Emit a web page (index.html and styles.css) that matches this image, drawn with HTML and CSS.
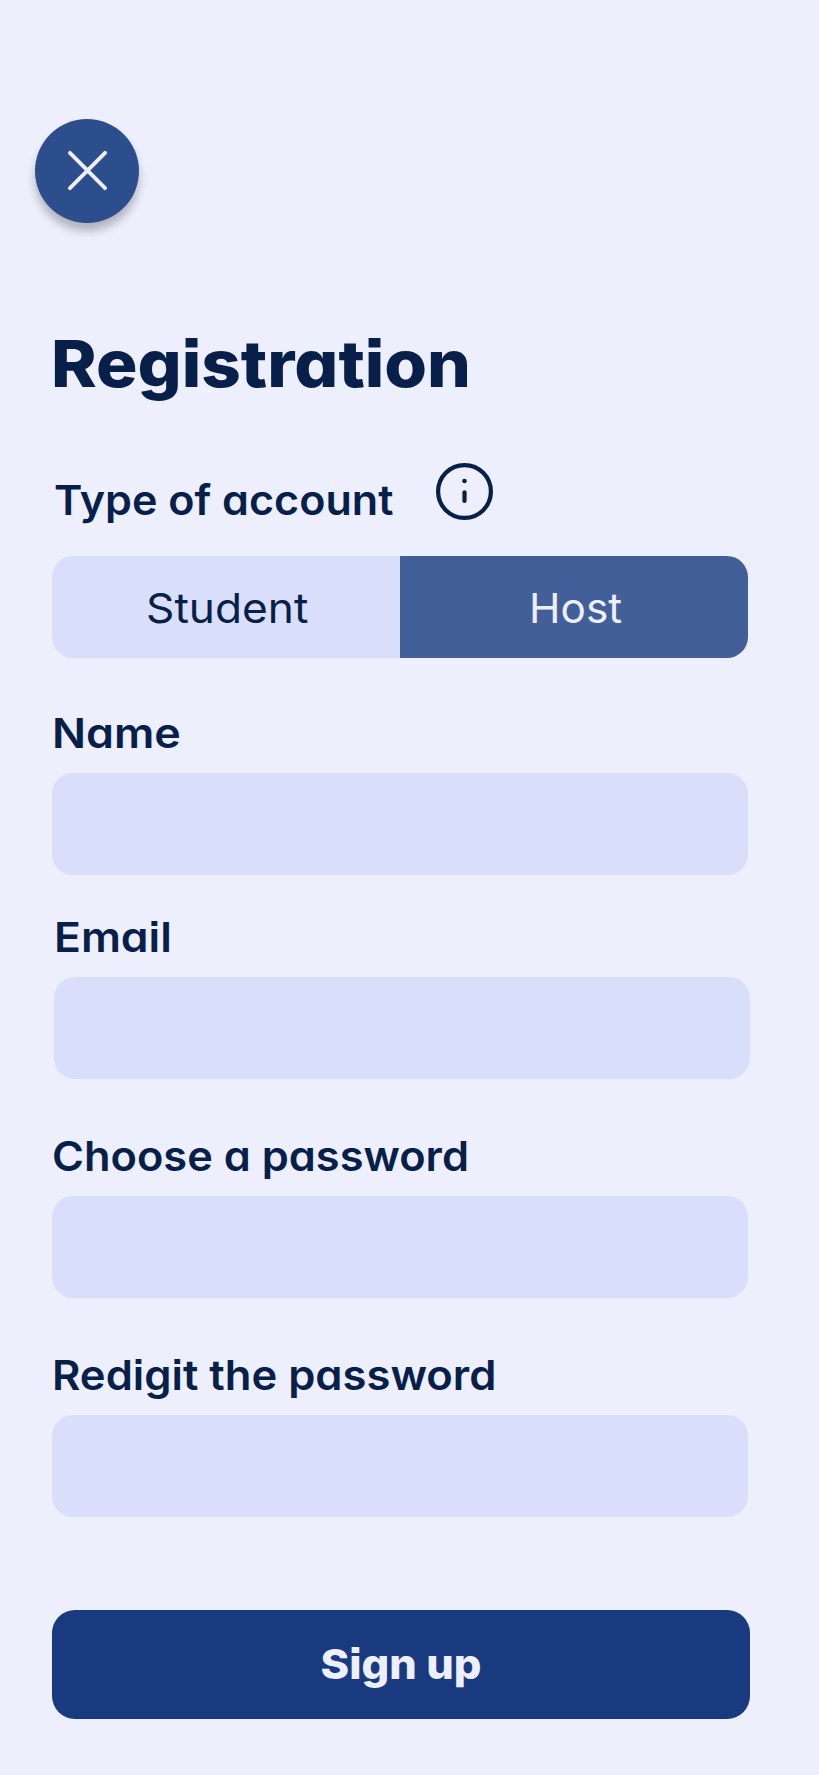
FILE: index.html
```html
<!DOCTYPE html>
<html lang="en">
<head>
<meta charset="utf-8">
<title>Registration</title>
<link rel="stylesheet" href="styles.css">
</head>
<body>
<main class="screen">
  <button class="close" type="button" aria-label="Close">
    <svg class="close-icon" viewBox="0 0 42 42"><path d="M3 3 39 39M39 3 3 39"/></svg>
  </button>
  <h1 class="title">Registration</h1>
  <form class="form">
    <div class="account-head">
      <span class="label type-label">Type of account</span>
      <svg class="info" viewBox="0 0 57 57"><circle class="ring" cx="28.500" cy="28.500" r="26.400"/><circle class="dot" cx="28.500" cy="18" r="2.300"/><path class="stem" d="M28.500 29.300v8.700"/></svg>
    </div>
    <div class="toggle">
      <button class="option student" type="button"><span class="text">Student</span></button>
      <button class="option host" type="button"><span class="text">Host</span></button>
    </div>
    <div class="field name"><label class="label" for="name">Name</label><input class="input" id="name"></div>
    <div class="field email"><label class="label" for="email">Email</label><input class="input" id="email" type="email"></div>
    <div class="field choose"><label class="label" for="password">Choose a password</label><input class="input" id="password" type="password"></div>
    <div class="field redigit"><label class="label" for="repeat">Redigit the password</label><input class="input" id="repeat" type="password"></div>
    <button class="submit" type="button"><span class="text">Sign up</span></button>
  </form>
</main>
</body>
</html>
```
FILE: styles.css
```css
* { box-sizing: border-box; }

body {
  margin: 0;
  background: #edeffc;
  color: #071f49;
  font-family: Inter, "Open Sans", sans-serif;
  font-feature-settings: "cv11", "ss07";
}

button, input { font: inherit; font-feature-settings: inherit; border: 0; margin: 0; padding: 0; }

.screen { width: 819px; height: 1775px; padding: 118.5px 0 0 52px; overflow: hidden; }

.close {
  display: flex;
  align-items: center;
  justify-content: center;
  width: 104px;
  height: 104px;
  margin-left: -16.6px;
  border-radius: 50%;
  background: #2d4e8c;
  box-shadow: 0 8px 9px rgba(0, 0, 0, .25);
}
.close-icon { width: 41px; height: 41px; fill: none; stroke: #edeffc; stroke-width: 4; stroke-linecap: round; }

.title { margin: 101.5px 0 0 -1px; line-height: 80px; font-size: 65px; font-weight: 800; white-space: nowrap; transform: scaleX(1.063); transform-origin: left; }

.form { display: flex; flex-direction: column; align-items: flex-start; }
.label { display: block; font-size: 41.5px; font-weight: 610; line-height: 50px; white-space: nowrap; transform-origin: left; }
.text { display: inline-block; }

.account-head { display: flex; height: 97px; margin-top: 44px; padding-top: 15px; }
.type-label { width: 382px; margin: 11.5px 0 0 2px; transform: scaleX(1.038); }
.info { width: 57px; height: 57px; fill: none; stroke: #071f49; stroke-width: 4.2; stroke-linecap: round; }
.info .dot { fill: #071f49; stroke: none; }

.toggle { display: flex; width: 696px; height: 102px; margin-top: 11px; border-radius: 21px; overflow: hidden; }
.option { flex: 1; padding: 1px 0 0 3px; font-size: 41.5px; font-weight: 400; }
.student { background: #d9defa; color: #071f49; }
.student .text { transform: scaleX(1.065); }
.host { background: #435f99; color: #edeffc; }
.host .text { transform: scaleX(1.02); }

.field { width: 696px; }
.input { display: block; width: 100%; height: 102px; border-radius: 21px; background: #d9defa; }
.field .label { margin-bottom: 15px; }
.name { margin-top: 50px; }
.name .label { transform: scaleX(1.08); }
.email { margin: 37px 0 0 2px; }
.email .label { margin-left: -.5px; transform: scaleX(1.07); }
.choose { margin-top: 52px; }
.choose .label { transform: scaleX(1.045); }
.redigit { margin-top: 51.5px; }
.redigit .label { transform: scaleX(1.05); }

.submit { width: 698px; height: 108.5px; margin-top: 93.5px; border-radius: 23px; background: #193a7f; color: #edeffc; font-size: 41.5px; font-weight: 780; }
.submit .text { transform: scaleX(1.045); }
```
